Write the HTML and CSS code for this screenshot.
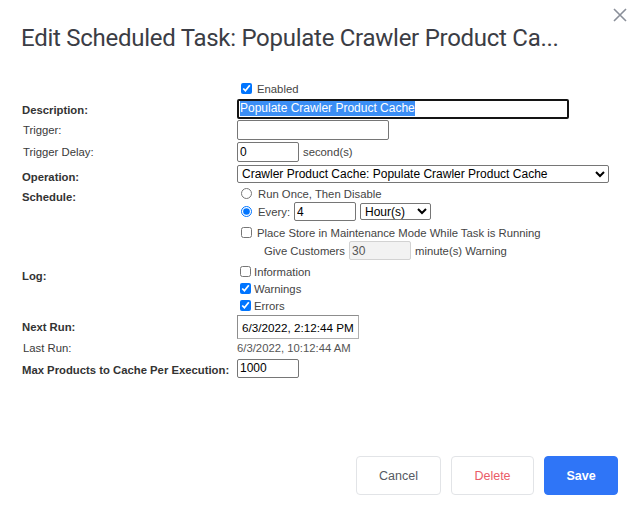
FILE: index.html
```html
<!DOCTYPE html>
<html>
<head>
<meta charset="utf-8">
<link rel="stylesheet" href="styles.css">
</head>
<body>
<div class="modal">
  <button class="close" aria-label="Close">
    <svg width="14" height="14" viewBox="0 0 14 14"><path d="M1 1L13 13M13 1L1 13" stroke="#8a8f99" stroke-width="1.6" fill="none"/></svg>
  </button>
  <h1 class="title">Edit Scheduled Task: Populate Crawler Product Ca...</h1>
  <div class="form">
    <div class="row r-enabled">
      <span class="label"></span>
      <label class="opt"><input type="checkbox" class="cb" checked><span class="gap">Enabled</span></label>
    </div>
    <div class="row r-desc">
      <span class="label bold">Description:</span>
      <div class="input focused w-desc"><span class="sel">Populate Crawler Product Cache</span></div>
    </div>
    <div class="row r-trigger">
      <span class="label plain">Trigger:</span>
      <input type="text" class="field w-trigger">
    </div>
    <div class="row r-delay">
      <span class="label plain">Trigger Delay:</span>
      <input type="text" class="field w-small" value="0">
      <span class="after">second(s)</span>
    </div>
    <div class="row r-op">
      <span class="label bold">Operation:</span>
      <select class="sel-op"><option>Crawler Product Cache: Populate Crawler Product Cache</option></select>
    </div>
    <div class="row r-runonce">
      <span class="label bold lab-sched">Schedule:</span>
      <label class="opt"><input type="radio" name="s" class="rb"><span class="gap2">Run Once, Then Disable</span></label>
    </div>
    <div class="row r-every">
      <span class="label"></span>
      <label class="opt"><input type="radio" name="s" class="rb" checked><span class="gap2">Every:</span></label>
      <input type="text" class="field w-small every-in" value="4">
      <select class="sel-hours"><option>Hour(s)</option></select>
    </div>
    <div class="row r-place">
      <span class="label"></span>
      <label class="opt"><input type="checkbox" class="cb"><span class="gap">Place Store in Maintenance Mode While Task is Running</span></label>
    </div>
    <div class="row r-give">
      <span class="label"></span>
      <span class="give">Give Customers</span>
      <input type="text" class="field w-small disabled" value="30" disabled>
      <span class="after">minute(s) Warning</span>
    </div>
    <div class="row r-log">
      <span class="label bold lab-log">Log:</span>
      <label class="opt"><input type="checkbox" class="cb cb-log"><span>Information</span></label>
    </div>
    <div class="row r-log">
      <span class="label"></span>
      <label class="opt"><input type="checkbox" class="cb cb-log" checked><span>Warnings</span></label>
    </div>
    <div class="row r-log">
      <span class="label"></span>
      <label class="opt"><input type="checkbox" class="cb cb-log" checked><span>Errors</span></label>
    </div>
    <div class="row r-next">
      <span class="label bold">Next Run:</span>
      <input type="text" class="field next-in" value="6/3/2022, 2:12:44 PM" readonly>
    </div>
    <div class="row r-last">
      <span class="label plain">Last Run:</span>
      <span class="lastrun">6/3/2022, 10:12:44 AM</span>
    </div>
    <div class="row r-max">
      <span class="label bold lab-max">Max Products to Cache Per Execution:</span>
      <input type="text" class="field w-small max-in" value="1000">
    </div>
  </div>
  <div class="footer">
    <button class="btn btn-cancel">Cancel</button>
    <button class="btn btn-delete">Delete</button>
    <button class="btn btn-save">Save</button>
  </div>
</div>
</body>
</html>
```
FILE: styles.css
```css
* { box-sizing: border-box; }
html, body { margin: 0; padding: 0; background: #fff; }
body { font-family: "Liberation Sans", Arial, sans-serif; }

.modal {
  position: relative;
  height: 507px;
  display: flex;
  flex-direction: column;
  padding-left: 22px;
}

.close {
  position: absolute;
  top: 8px;
  right: 11px;
  width: 14px;
  height: 14px;
  padding: 0;
  border: 0;
  background: none;
  display: flex;
}

.title {
  margin: 24px 0 0 -1px;
  font-family: Roboto, "Liberation Sans", sans-serif;
  font-weight: 400;
  font-size: 24px;
  line-height: 28px;
  letter-spacing: -0.27px;
  color: #3b3d45;
}

.form {
  margin-top: 27px;
  display: flex;
  flex-direction: column;
  font-size: 11.3px;
  color: #444;
}

.row { display: flex; align-items: center; }
.label { width: 215px; flex: none; color: #333; }
.label.bold { font-weight: bold; }
.label.plain { padding-left: 1px; color: #3a3a3a; }

.r-enabled { height: 19px; }
.r-desc { height: 21px; }
.r-desc .label { padding-top: 3px; }
.r-trigger { height: 22px; }
.r-delay { height: 22px; }
.r-op { height: 22px; }
.r-op .label { padding-top: 5px; }
.r-runonce { height: 17px; }
.lab-sched { align-self: flex-start; padding-top: 6px; }
.r-every { height: 19px; }
.r-place { height: 21px; padding-top: 2px; }
.r-give { height: 17px; margin-bottom: 4px; }
.r-log { height: 17px; }
.lab-log { align-self: flex-start; padding-top: 7px; }
.r-next { height: 26px; }
.r-last { height: 18px; }
.r-last .label, .lastrun { padding-bottom: 2px; }
.r-max { height: 20px; }
.lab-max { padding-top: 3px; }

.opt { display: flex; align-items: center; }
.cb {
  width: 11px; height: 11px;
  margin: 0 0 0 4px;
  accent-color: #0075ff;
}
.cb-log { margin: 0 3px 0 3px; }
.gap { margin-left: 5px; }
.rb {
  width: 11px; height: 11px;
  margin: 0 0 0 4px;
}
.gap2 { margin-left: 6px; }

.input, .field {
  height: 20px;
  font-family: "Liberation Sans", Arial, sans-serif;
  font-size: 12px;
  color: #000;
  border: 1px solid #767676;
  border-radius: 2px;
  background: #fff;
  padding: 0 2px;
  margin: 0;
  outline: none;
}
.input.focused {
  border: 2px solid #141414;
  padding: 0 1px;
  display: flex;
  align-items: center;
}
.sel { background: #3b8ef5; color: #fff; line-height: 15px; }
.w-desc { width: 332px; height: 20px; }
.w-trigger { width: 152px; }
.w-small { width: 62px; }
.after { margin-left: 4px; }

.sel-op {
  width: 372px;
  height: 18px;
  font-family: "Liberation Sans", Arial, sans-serif;
  font-size: 12px;
  color: #000;
  border: 1px solid #767676;
  border-radius: 2px;
  background: #fff;
  padding: 0;
  margin: 0;
}
.every-in { height: 19px; margin-left: 4px; }
.sel-hours {
  width: 71px;
  height: 17px;
  margin-left: 4px;
  font-family: "Liberation Sans", Arial, sans-serif;
  font-size: 12px;
  color: #000;
  border: 1px solid #767676;
  border-radius: 2px;
  background: #fff;
  padding: 0;
}
.give { margin-left: 27px; margin-right: 4px; }
.disabled {
  height: 19px;
  background: #f2f2f2;
  border-color: #d2d2d2;
  color: #555;
}
.next-in {
  width: 122px;
  height: 24px;
  padding: 0 1px 0 4px;
  font-size: 11.7px;
  border: 1px solid #b0b0b0;
  border-top-color: #8d8d8d;
  border-left-color: #8d8d8d;
  border-radius: 0;
}
.lastrun { color: #555; }
.max-in { height: 19px; }

.footer {
  margin-top: auto;
  padding: 0 20px 12px 0;
  display: flex;
  justify-content: flex-end;
  gap: 10px;
}
.btn {
  height: 39px;
  border-radius: 4px;
  border: 1px solid #e2e4e7;
  background: #fff;
  font-family: "Liberation Sans", Arial, sans-serif;
  font-size: 12.5px;
  cursor: pointer;
}
.btn-cancel { width: 85px; color: #555a63; }
.btn-delete { width: 83px; color: #ea5c68; }
.btn-save { width: 74px; color: #fff; background: #2f75f7; border-color: #2f75f7; font-weight: bold; }
```
